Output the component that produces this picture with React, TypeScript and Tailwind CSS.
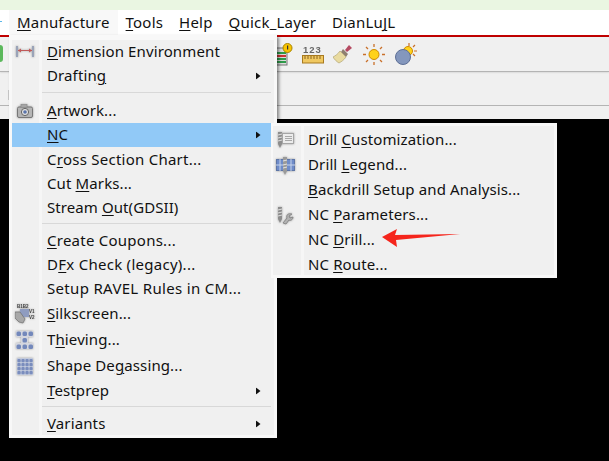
import type { ReactNode } from 'react';

const font = 'font-["Noto_Sans",sans-serif]';

function U({ children }: { children: ReactNode }) {
  return <span className="underline decoration-1 underline-offset-2">{children}</span>;
}

function TopItem({ children, active = false }: { children: ReactNode; active?: boolean }) {
  return (
    <div className={`flex h-[25px] items-center px-[8px] ${active ? 'bg-[#f8f8f8]' : ''}`}>
      <span className="whitespace-nowrap tracking-[0.2px]">{children}</span>
    </div>
  );
}

function Arrow() {
  return (
    <svg width="5" height="7" viewBox="0 0 5 7" className="absolute right-[13px] top-1/2 -translate-y-1/2">
      <path d="M0 0L4.5 3.5L0 7Z" fill="#111" />
    </svg>
  );
}

interface RowProps {
  children: ReactNode;
  icon?: ReactNode;
  sub?: boolean;
  active?: boolean;
  h?: string;
  track?: string;
}

function Row({ children, icon, sub, active, h = 'h-[24px]', track = 'tracking-[0.12px]' }: RowProps) {
  return (
    <div className={`relative flex ${h} items-center ${active ? 'bg-[#91c9f7]' : ''}`}>
      <div className="mr-[10px] flex w-[25px] shrink-0 items-center justify-center drop-shadow-[0_0_1px_rgba(0,0,0,0.35)]">{icon}</div>
      <span className={`-mt-[2px] whitespace-nowrap ${track}`}>{children}</span>
      {sub && <Arrow />}
    </div>
  );
}

function Sep({ my }: { my: string }) {
  return <div className={`ml-[30px] mr-[3px] h-px bg-[#d8d8d8] ${my}`} />;
}

function DimIcon() {
  return (
    <svg width="18" height="12" viewBox="0 0 18 12">
      <rect x="0" y="0" width="2" height="11" fill="#9aa3b8" />
      <rect x="16" y="0" width="2" height="11" fill="#9aa3b8" />
      <path d="M2 4.5H16" stroke="#c05a5a" strokeWidth="1" />
      <path d="M2 4.5l3-2v4ZM16 4.5l-3-2v4Z" fill="#c05a5a" />
    </svg>
  );
}

function CameraIcon() {
  return (
    <svg width="16" height="14" viewBox="0 0 16 14">
      <rect x="0.5" y="3" width="15" height="10.5" rx="1.5" fill="#b5b5b5" stroke="#777" />
      <rect x="4" y="0.5" width="6" height="3" fill="#a5a5a5" stroke="#888" strokeWidth="0.6" />
      <circle cx="8" cy="8" r="3.6" fill="#e2e2e2" stroke="#666" />
      <circle cx="8" cy="8" r="1.8" fill="#5a74aa" />
    </svg>
  );
}

function SilkIcon() {
  return (
    <svg width="20" height="20" viewBox="0 0 20 20">
      <text x="2" y="4" fontSize="4.5" fontWeight="700" fill="#444" fontFamily="Liberation Sans, sans-serif">B1B2</text>
      <rect x="5" y="5" width="9" height="8" fill="#8f9cc0" />
      <path d="M0 8l5 0 5 7-2 4-4-1-4-4Z" fill="#a8a8a8" stroke="#666" strokeWidth="0.6" />
      <text x="14" y="9" fontSize="4.5" fontWeight="700" fill="#444" fontFamily="Liberation Sans, sans-serif">V1</text>
      <text x="14" y="15" fontSize="4.5" fontWeight="700" fill="#444" fontFamily="Liberation Sans, sans-serif">V2</text>
    </svg>
  );
}

function ThievingIcon() {
  const cells = [[0, 0], [6, 0], [12, 0], [6, 6.5], [0, 13], [6, 13], [12, 13]];
  return (
    <svg width="17" height="18" viewBox="0 0 17 18">
      <path d="M0 0h17v6h-5v6h5v6H0v-6h5V6H0Z" fill="#d4d6de" />
      {cells.map(([x, y]) => (
        <rect key={`${x}-${y}`} x={x + 0.5} y={y + 0.5} width="4.5" height="4.5" rx="1.5" fill="#7388bb" />
      ))}
    </svg>
  );
}

function DegasIcon() {
  const cells = [0, 4, 8, 12];
  return (
    <svg width="16" height="17" viewBox="0 0 16 17">
      <rect width="16" height="17" fill="#c3cadc" />
      {cells.map((x) =>
        cells.map((y) => <rect key={`${x}-${y}`} x={x + 0.4} y={y + 0.9} width="3.3" height="3.3" rx="1" fill="#7a8dbd" />),
      )}
    </svg>
  );
}

function DrillCustomIcon() {
  return (
    <svg width="17" height="17" viewBox="0 0 17 17">
      <rect x="5.5" y="1.5" width="11" height="10" fill="#ececec" stroke="#a5a5a5" />
      <path d="M8 4.5h7M8 6.5h7M8 8.5h7" stroke="#a8a8a8" />
      <path d="M1 0h4v12l-2 4-2-4Z" fill="#8d8d8d" />
      <path d="M1 3l4-1M1 6l4-1M1 9l4-1" stroke="#ddd" />
    </svg>
  );
}

function DrillLegendIcon() {
  return (
    <svg width="19" height="18" viewBox="0 0 19 18">
      <rect x="0.5" y="2.5" width="18" height="11" fill="#6f8cc9" stroke="#5f76a6" />
      <path d="M4 2v12M15 2v12M0 8h19" stroke="#c8d4ea" />
      <path d="M7 0h4v14l-2 4-2-4Z" fill="#9a9a9a" />
      <path d="M7 4l4-1M7 8l4-1M7 11l4-1" stroke="#e2e2e2" />
    </svg>
  );
}

function NcParamIcon() {
  return (
    <svg width="17" height="18" viewBox="0 0 17 18">
      <path d="M1 0h4v12l-2 4-2-4Z" fill="#8d8d8d" />
      <path d="M1 3l4-1M1 6l4-1M1 9l4-1" stroke="#ddd" />
      <path d="M6 16l4-5c-1-3 1-5 5-4l-3 2 1 2 3-1c0 3-3 4-4 3l-3 4Z" fill="#b2b2b2" stroke="#777" strokeWidth="0.7" />
    </svg>
  );
}

function RulerIcon() {
  return (
    <svg width="22" height="19" viewBox="0 0 22 19">
      <text x="1" y="8" fontSize="9.5" fontWeight="700" fill="#666" fontFamily="Liberation Sans, sans-serif" letterSpacing="1">123</text>
      <rect x="0.5" y="10.5" width="21" height="7.5" fill="#f0c860" stroke="#a87a20" />
      <path d="M3 11v3M6 11v3M9 11v3M12 11v3M15 11v3M18 11v3" stroke="#8a6420" />
    </svg>
  );
}

function BrushIcon() {
  return (
    <svg width="20" height="20" viewBox="0 0 20 20">
      <path d="M12 6l4-5 3 3-5 4Z" fill="#b54a62" />
      <path d="M10 5l5 5-2 3-5-5Z" fill="#8f7f70" />
      <path d="M7 7l6 6c-2 3-5 5-7 6C4 18 1 15 0 13c2-1 5-3 7-6Z" fill="#e9dba0" stroke="#a89a66" strokeWidth="0.6" />
    </svg>
  );
}

function SunIcon() {
  return (
    <svg width="24" height="23" viewBox="0 0 24 23">
      <circle cx="12" cy="11.5" r="5" fill="#ffd21a" stroke="#d08a00" />
      <path d="M12 1v3M12 19v3M1 11.5h3M20 11.5h3M4 4l2 2M18 17l2 2M20 4l-2 2M6 17l-2 2" stroke="#c9702a" strokeWidth="1.3" />
    </svg>
  );
}

function BombIcon() {
  return (
    <svg width="22" height="23" viewBox="0 0 22 23">
      <path d="M14 0v3M22 8h-3M20 2l-2 2M20 13l-2-2" stroke="#c9702a" strokeWidth="1.2" />
      <circle cx="13" cy="8" r="4.5" fill="#ffd21a" stroke="#d08a00" />
      <circle cx="8" cy="14" r="7.5" fill="#8497bd" stroke="#5d6f96" />
    </svg>
  );
}

function InfoGridIcon() {
  return (
    <svg width="18" height="23" viewBox="0 0 18 23">
      <rect x="0" y="5" width="12" height="17" fill="#ddd" stroke="#777" />
      <path d="M1 10h10" stroke="#2f9b4a" strokeWidth="2" />
      <path d="M1 13h10" stroke="#c33" strokeWidth="2" />
      <path d="M1 16h10M1 19h10" stroke="#2f9b4a" strokeWidth="2" />
      <circle cx="12.5" cy="5" r="4.5" fill="#f8c400" stroke="#a88400" />
      <rect x="12" y="2.5" width="1.2" height="4" fill="#333" />
    </svg>
  );
}

export default function App() {
  return (
    <div className={`relative h-[461px] w-[609px] overflow-hidden bg-black text-[15px] text-[#111] ${font}`}>
      <div className="h-[10px] bg-[#eaf6e2]" />
      <div className="flex h-[25px] items-center bg-white pl-[9px]">
        <TopItem active><U>M</U>anufacture</TopItem>
        <TopItem><U>T</U>ools</TopItem>
        <TopItem><U>H</U>elp</TopItem>
        <TopItem><U>Q</U>uick_Layer</TopItem>
        <TopItem>DianLu<U>J</U>L</TopItem>
      </div>
      <div className="h-[2px] bg-[#c80000]" />
      <div className="flex h-[35px] items-center gap-[9px] border-b border-[#b4b4b4] bg-[#f0f0f0] pl-[275px] drop-shadow-[0_0_1px_rgba(0,0,0,0.2)]">
        <InfoGridIcon />
        <RulerIcon />
        <BrushIcon />
        <SunIcon />
        <BombIcon />
      </div>
      <div className="h-[34px] border-b border-[#b4b4b4] bg-[#f0f0f0]" />
      <div className="h-[13px] bg-[#f0f0f0]" />

      <div className="absolute left-0 top-[45px] h-[17px] w-[3px] rounded-r bg-[#5cb85c]" />
      <div className="absolute left-0 top-[21px] h-px w-[2px] bg-[#5bb7e8]" />
      <div className="absolute left-[8px] top-[90px] h-[10px] w-px bg-[#c8c8c8]" />

      {/* Manufacture menu */}
      <div className="absolute left-[9px] top-[35px] h-[403px] w-[268px] border-[3px] border-t-[5px] border-[#f8f8f8] bg-[#f0f0f0] shadow-[2px_2px_3px_rgba(0,0,0,0.45)]">
        <div className="absolute bottom-0 left-[27px] top-0 w-[3px] bg-[#f6f6f6]" />
        <div className="relative">
          <Row icon={<DimIcon />}><U>D</U>imension Environment</Row>
          <Row sub>Draftin<U>g</U></Row>
          <Sep my="mt-[4px] mb-[6px]" />
          <Row icon={<CameraIcon />}><U>A</U>rtwork...</Row>
          <Row sub active><U>N</U>C</Row>
          <div className="h-px" />
          <Row track="tracking-[0.25px]">C<U>r</U>oss Section Chart...</Row>
          <Row>Cut <U>M</U>arks...</Row>
          <Row track="tracking-[0.08px]">Stream <U>O</U>ut(GDSII)</Row>
          <Sep my="mt-[3px] mb-[5px]" />
          <Row track="tracking-[0.25px]"><U>C</U>reate Coupons...</Row>
          <Row track="tracking-[0.27px]">D<U>F</U>x Check (legacy)...</Row>
          <Row track="tracking-[0.32px]">Setup RAVEL Rules in CM...</Row>
          <Row h="h-[26px]" icon={<SilkIcon />}><U>S</U>ilkscreen...</Row>
          <Row h="h-[26px]" icon={<ThievingIcon />}>T<U>h</U>ieving...</Row>
          <Row h="h-[26px]" icon={<DegasIcon />}>Shape De<U>g</U>assing...</Row>
          <Row sub><U>T</U>estprep</Row>
          <Sep my="mt-[3px] mb-[5px]" />
          <Row sub><U>V</U>ariants</Row>
        </div>
      </div>

      {/* NC submenu */}
      <div className="absolute left-[271px] top-[123px] h-[155px] w-[286px] border-[3px] border-l-[2px] border-[#f8f8f8] bg-[#f0f0f0]">
        <div className="absolute bottom-0 left-[28px] top-0 w-[3px] bg-[#f6f6f6]" />
        <div className="relative pt-[2px]">
          <Row h="h-[25px]" icon={<DrillCustomIcon />}>Drill <U>C</U>ustomization...</Row>
          <Row h="h-[25px]" icon={<DrillLegendIcon />}>Drill <U>L</U>egend...</Row>
          <Row h="h-[25px]">
            <U>B</U>ackdrill Setup and Analysis...
          </Row>
          <Row h="h-[25px]" icon={<NcParamIcon />}>NC <U>P</U>arameters...</Row>
          <Row h="h-[25px]">NC <U>D</U>rill...</Row>
          <Row h="h-[25px]">NC <U>R</U>oute...</Row>
        </div>
      </div>

      <svg className="absolute left-[380px] top-[226px]" width="82" height="22" viewBox="0 0 82 22">
        <path d="M2 11L17 3L15 9L80 8L16 14L17 21Z" fill="#f5251c" />
      </svg>
    </div>
  );
}
